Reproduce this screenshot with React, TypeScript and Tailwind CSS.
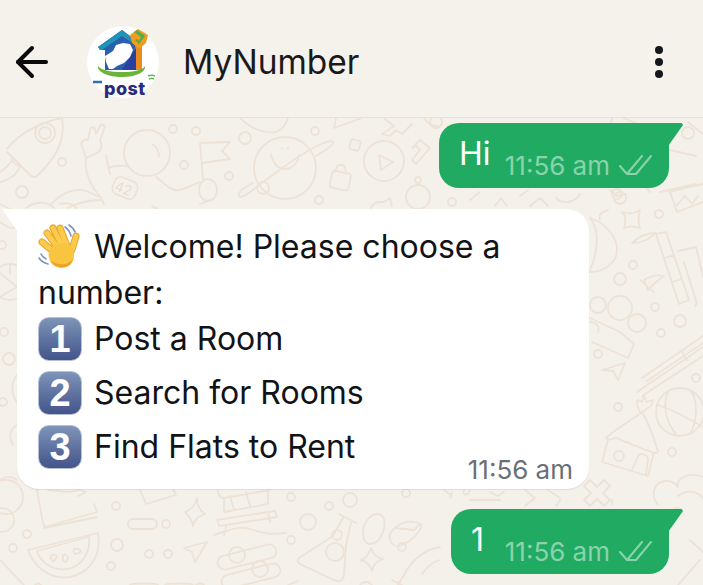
import React from 'react';
import { ArrowLeft } from 'lucide-react';

const font = "font-['Inter','Liberation_Sans',sans-serif]";

// Wallpaper doodles, drawn once behind the chat
const Wallpaper = () => (
  <svg className="absolute inset-0 h-full w-full" viewBox="0 118 703 467" fill="none" stroke="#ede2d6" strokeWidth="1.8" strokeLinejoin="round" strokeLinecap="round">
    {/* rocket */}
    <path d="M7 149C20 132 42 122 62 118C66 140 56 158 37 176C34 178 32 177 30 175L7 152" />
    <circle cx="45" cy="133" r="10" /><circle cx="45" cy="133" r="6" />
    <path d="M0 172c6-4 10-8 12-12 2 4 6 6 8 6-2 6-6 10-10 12-4 2-8 4-10 4" />
    <circle cx="62" cy="162" r="4" /><circle cx="22" cy="192" r="6" />
    <path d="M0 204l12 6M26 208c8-6 20-8 28 0M60 204c8-2 14 0 18 6" />
    {/* astronaut */}
    <path d="M86 158l-4-12c-2-4 2-8 6-6l2-10c1-4 5-3 5 0l1 4 4-8c2-3 6-1 4 3l-4 12c3 4 1 10-3 12l-11 5z" />
    <path d="M86 158c-2 12 4 28 14 38l4 8M106 156l4 18" />
    <circle cx="147" cy="153" r="23" />
    <path d="M152 144c5 3 7 8 7 13" />
    <path d="M108 168c8-3 14-3 21-1M156 177c6 4 10 10 18 13 10 2 16-6 28-8" />
    <rect x="113" y="179" width="24" height="18" rx="6" transform="rotate(22 125 188)" />
    <text x="115" y="194" fontFamily="Inter, sans-serif" fontSize="14" stroke="none" fill="#e9ded2" transform="rotate(22 125 188)">42</text>
    <path d="M50 205c12-12 24-18 36-14l14 6M100 200c-8 0-22 2-32 8M152 206l22 12M200 204l10-4" />
    {/* flag */}
    <path d="M203 180l-3-37 30-1-8 9 8 8-28 4" />
    <ellipse cx="208" cy="190" rx="9" ry="11" />
    <circle cx="173" cy="129" r="4" /><circle cx="196" cy="131" r="4" /><circle cx="184" cy="165" r="4" /><circle cx="229" cy="176" r="4" /><circle cx="245" cy="138" r="6" />
    <path d="M240 118c10 10 24 16 36 14 6-2 10-8 12-14" />
    {/* planet */}
    <circle cx="285" cy="168" r="31" />
    <path d="M271 154c2 10 8 15 14 15s12-4 14-14M282 148v1M288 148v1" />
    <path d="M316 156c10-6 18-12 17-14-2-3-16 3-30 12-20 12-44 32-56 40-6 4-9 4-8-1 1-2 6-6 14-10" />
    <circle cx="263" cy="188" r="6" />
    <circle cx="315" cy="131" r="4" /><circle cx="319" cy="200" r="4" />
    <rect x="331" y="172" width="19" height="17" rx="3" transform="rotate(12 340 180)" />
    <path d="M335 172c1-10 11-10 11 2" />
    <rect x="350" y="140" width="10" height="10" rx="2" transform="rotate(15 355 145)" />
    <circle cx="384" cy="161" r="20" />
    <path d="M379 155l14 7-12 8z" />
    <path d="M336 118l-2 10 28-10M384 118l10 8-12 8 8 2 6-6 6 4 10-10" />
    <path d="M412 148l8-8 10 8-14 16-4-4 8-10-4-4z" />
    <circle cx="418" cy="197" r="12" /><circle cx="418" cy="180" r="3" />
    <path d="M370 210c2-6 6-8 10-8l4 0 6-4 2 8" />
    <circle cx="436" cy="122" r="6" />
    {/* right column */}
    <rect x="606" y="122" width="48" height="34" rx="2" transform="rotate(22 630 139)" />
    <circle cx="688" cy="133" r="6" />
    <path d="M670 150l26 6M688 122l15 12" />
    <path d="M610 190l7 6 9-2M640 182l10 10M660 192l36-8" />
    <circle cx="617" cy="194" r="5" />
    <path d="M669 192l34-8M670 192l7 20 26-10M676 206l9-10 7 8 6-8" />
    <path d="M590 218c14 4 27 18 27 32 0 12-12 22-27 22M590 218c8 8 10 30 0 52M600 220c-2-6 2-8 8-10" />
    <path d="M622 212c6 2 12 2 18-2-2 6-2 12 0 18-6-2-12-2-16 0 2-6 2-12-2-16z" />
    <circle cx="659" cy="214" r="4" /><circle cx="633" cy="265" r="4" /><circle cx="620" cy="279" r="6" /><circle cx="655" cy="307" r="4" /><circle cx="680" cy="321" r="6" /><circle cx="661" cy="333" r="4" />
    <path d="M656 234l10-2 23 68-10 4zM664 258l10-3M672 282l10-3M632 243c6-6 14-10 24-10l-8 6c-4 2-10 4-16 4zM644 280c6-4 12-6 20-4l-8 6-8 8zM678 251l18-4 7 30M684 262l13 42-2 2M640 280l14 12" />
    <circle cx="598" cy="305" r="8" /><circle cx="620" cy="308" r="12" /><circle cx="637" cy="323" r="9" />
    <path d="M590 318l30 14 14 12 -6 14-36-16M590 322c6 0 10 4 8 10" />
    <circle cx="598" cy="354" r="4" />
    <path d="M602 370l23-7-7 17-5-9z" />
    <path d="M642 378l61-42M647 381l56-38M637 392l66-45M642 396l61-40M682 352l5 8" />
    <circle cx="696" cy="378" r="4" /><circle cx="618" cy="407" r="4" />
    <circle cx="680" cy="412" r="24" />
    <path d="M657 405c16 4 32 14 46 22M668 392c-6 14-2 30 8 42M690 390c8 8 8 30 0 44" />
    <path d="M606 438c8-8 26-18 36-26 6 10 12 26 16 40-4 4-8-2-12-2-4 0-6-4-10-4s-6-4-10-4-6-4-10-4-6 4-10 0z" />
    <path d="M640 412c-2-4-4-10-2-12l4 2 2-6 3 6 6-2-2 6-9 6" />
    <path d="M608 440l-6 22 46 14 6-24" />
    <circle cx="619" cy="456" r="5" />
    <path d="M632 470l6-14c2-4 10-2 10 4l-2 14" />
    <circle cx="672" cy="452" r="4" />
    <path d="M590 480l7 7 7-7 6 6-7 7 7 7-6 6-7-7-7 7-6-6 7-7-7-7z" />
    <path d="M658 505c-8-10-4-22 6-24 6-1 12 2 14 6-2-8 10-16 25-10M678 496c8-6 18-6 25 2M672 510c4-4 10-2 10 2" />
    <path d="M700 560l-22 25M690 540l13 12" />
    {/* left edge */}
    <path d="M0 222c8 6 14 8 16 4l2-4" />
    <circle cx="2" cy="245" r="4" />
    <circle cx="10" cy="282" r="18" />
    <path d="M0 273l18 15M0 297l17-10M10 264v10" />
    <circle cx="4" cy="332" r="4" /><circle cx="9" cy="359" r="6" /><circle cx="3" cy="402" r="4" />
    <path d="M17 375c-6 8-6 18 0 28M17 425c-8 4-8 14-4 20" />
    <path d="M0 480c6-4 12-4 17 0" />
    {/* bottom strip */}
    <circle cx="6" cy="497" r="17" /><circle cx="2" cy="520" r="12" />
    <path d="M37 490l6 33 2 4 52-15-3-8M44 528l53-11M48 490l20 2 12-2 6 2-8 4" />
    <circle cx="116" cy="506" r="4" />
    <rect x="128" y="519" width="29" height="10" rx="5" />
    <circle cx="166" cy="524" r="4" />
    <path d="M140 490l6 14 30-9-3-6" />
    <path d="M185 512c6-2 10-6 12-14 0 6 2 12 8 16-6 2-10 4-12 12-1-6-4-10-8-14z" />
    <circle cx="27" cy="534" r="4" /><circle cx="13" cy="548" r="4" /><circle cx="117" cy="545" r="6" /><circle cx="111" cy="566" r="4" /><circle cx="149" cy="554" r="4" /><circle cx="168" cy="554" r="4" />
    <path d="M28 550l70-17c4 22-8 40-28 44-20 3-36-10-42-27zM37 551l52-14c2 16-8 30-22 32-14 2-26-6-30-18z" />
    <path d="M51 556c2-2 5-2 6 1l-3 4c-2 0-4-2-3-5zM63 555c2-1 5 0 5 3l-2 4c-3 0-4-3-3-7zM74 549c3-1 6 0 7 3l-5 2c-2-1-3-3-2-5z" />
    <path d="M184 548l23-6-12 20-3-10z" />
    <path d="M218 490c0 6 2 8 6 8l0 14 44-8 0-14M224 498l46-8M230 496l4 14M246 492l4 14M217 520l58-9 2 6-58 9zM226 526l-2 10M268 512l2 10M214 535c14-4 24-10 36-6 12 4 20 6 36 4" />
    <circle cx="308" cy="522" r="8" />
    <circle cx="291" cy="497" r="4" /><circle cx="291" cy="540" r="4" /><circle cx="329" cy="506" r="4" /><circle cx="350" cy="500" r="7" /><circle cx="402" cy="547" r="4" /><circle cx="406" cy="493" r="4" />
    <rect x="217" y="550" width="60" height="14" rx="7" transform="rotate(-14 247 557)" />
    <circle cx="237" cy="555" r="8" />
    <rect x="221" y="569" width="60" height="14" rx="7" transform="rotate(-14 251 576)" />
    <circle cx="260" cy="569" r="8" />
    <path d="M339 514l17 9M343 518l-10 18-34 22c-3 3-1 4 1 6l36 17c4 1 8-2 8-6l2-30 5-22" />
    <circle cx="337" cy="535" r="5" /><circle cx="335" cy="552" r="9" />
    <path d="M363 532c0-10 8-18 14-18s10 6 6 18c-3 8-7 12-13 12-5 0-7-4-7-12zM391 532c6-8 18-14 30-8 2 4-8 18-22 22-6 1-12-6-8-14zM396 528l18 2 6-6" />
    <path d="M360 560c4 0 8-4 11-12 2 6 6 10 12 11-6 2-10 6-11 12-2-6-6-10-12-11z" />
    <path d="M440 547c-14 2-28 12-36 28l-6 10M440 560c-8 2-14 8-18 14M392 580l10 5" />
    <path d="M0 560l24 25M35 585c2-2 4-2 6 0M130 585c0-2 28-2 28 0M165 585c0-2 28-2 28 0M196 585c2-2 6-2 8 0M288 585l10-4M360 585c3-4 9-4 12 0" />
    {/* gap between bubbles */}
    <path d="M452 492l-2 6M444 490l8 6M470 490c-2 6-8 6-6 0M490 492l8 4 6-4M470 500l30 0M525 490l10 8-10 8M548 490l12 8M560 500l-4 6" />
    <path d="M600 510c6 0 8 4 8 10M612 500l0 4" />
    {/* gap under the first bubble */}
    <path d="M520 196l8-6M470 200l10-8M556 198c6 6 18 6 24-4" />
    <circle cx="620" cy="198" r="6" />
    <path d="M424 118c2 4 8 8 14 8" />
    <circle cx="452" cy="202" r="4" />
    <path d="M495 206l6-8 6 8M530 206l10-8 8 8" />
  </svg>
);

// Message tick marks
const DoubleCheck = () => (
  <svg width="33" height="22" viewBox="0 0 33 22" fill="none" stroke="#8bd3ab" strokeWidth="2" strokeLinecap="round" strokeLinejoin="round" className="mb-[5px] ml-[9px]">
    <path d="M1 12l7 8L23 2M17 20L32 2M8 20h9" />
  </svg>
);

const Keycap = ({ n }: { n: number }) => (
  <span className="mr-[12px] flex h-[44px] w-[44px] shrink-0 items-center justify-center rounded-[11px] border-[1.5px] border-[#b3c0d8] bg-gradient-to-b from-[#7f94b8] to-[#43548a] font-['Liberation_Sans',sans-serif] text-[38px] font-bold text-white">
    {n}
  </span>
);

const WaveEmoji = () => (
  <svg width="44" height="46" viewBox="0 0 44 46" className="mr-[12px] shrink-0" fill="none" strokeLinecap="round">
    <path d="M27 3c3 2 5 5 6 9M31 1c3 2 5 4 6 7M1 34c2 3 5 5 9 6M3 30c1 2 3 4 5 5" stroke="#7f93c0" strokeWidth="1.6" />
    <g stroke="#e8a22a" strokeWidth="7">
      <path d="M4 18l12 10M9 9l11 15M15 4l9 18M22 4l7 18M38 12l-4 14" />
    </g>
    <g stroke="#fbcb4c" strokeWidth="5">
      <path d="M4 18l12 10M9 9l11 15M15 4l9 18M22 4l7 18M38 12l-4 14" />
    </g>
    <path d="M12 25c3-5 14-8 20-4 6 5 5 16 0 20-5 4-12 4-17 0-4-4-6-11-3-16z" fill="#f9c440" />
    <path d="M12 36c3 5 8 8 14 7 4 0 8-3 9-8-3 4-8 6-13 5-4 0-7-2-10-4z" fill="#eda32a" />
  </svg>
);

// Small stand-in for the contact's round logo
const Logo = () => (
  <svg width="72" height="72" viewBox="0 0 72 72" className="shrink-0">
    <circle cx="36" cy="36" r="36" fill="#ffffff" />
    {/* house */}
    <path d="M11 21L35 4l12 9v5h8v26H18V24h-5z" fill="#2a5fae" />
    <path d="M11 21L35 4l12 9-3 3-9-6-20 14h-2z" fill="#1f93b8" />
    <path d="M49 18h6v26H44z" fill="#e88c20" />
    <path d="M35 44l14-22v22z" fill="#2b3f9e" />
    {/* map */}
    <path d="M18 30l8-5 3-6 7-2 7 1 3 6-3 7-6 6-7 3-4 3h-4l-3-7z" fill="#ffffff" />
    {/* shield and tick */}
    <path d="M43 9l8-6 10 6-2 8-7 6-7-6z" fill="#f29b1e" />
    <path d="M47 6l3-2 8 6-6 8-4-4 2-1 2 2 2-4z" fill="#4caf50" />
    {/* ring */}
    <path d="M11 40c-1 6 10 11 24 11s24-5 23-11c-2 4-11 6-23 6s-21-2-24-6z" fill="#6bb33a" />
    <path d="M6 56h9" stroke="#2f6fb5" strokeWidth="2.5" />
    <path d="M61 50c2-1 5-1 7 0M62 53c2-1 3-1 5 0" stroke="#57b14a" strokeWidth="1.4" fill="none" />
    <text x="17" y="69" fontFamily="Inter, sans-serif" fontWeight="800" fontSize="18" letterSpacing="0.4" fill="#2a2a7c">post</text>
  </svg>
);

const OutgoingBubble = ({ text, width }: { text: string; width: string }) => (
  <div className="relative z-10 self-end">
    {/* tail */}
    <div className="absolute right-[-14px] top-0 h-[26px] w-[17px] bg-[#21ab62] [clip-path:polygon(0_0,92%_0,100%_8%,0_100%)]" />
    <div className={`flex h-[65px] ${width} justify-between rounded-[20px] rounded-tr-none bg-[#21ab62] pl-[20px] pr-[17px]`}>
      <span className="pt-[11px] text-[32px] leading-[40px] text-white">{text}</span>
      <span className="flex items-end pb-[7px] text-[26px] leading-[30px] text-[#8bd3ab]">
        11:56 am
        <DoubleCheck />
      </span>
    </div>
  </div>
);

const Row = ({ n, label }: { n: number; label: string }) => (
  <div className="flex h-[54px] items-center">
    <Keycap n={n} />
    <span>{label}</span>
  </div>
);

export default function App() {
  return (
    <div className={`${font} flex h-[585px] w-[703px] flex-col overflow-hidden bg-[#f4f1eb] text-[#111316]`}>
      <header className="flex h-[118px] shrink-0 items-center border-b border-[#e6e3dd] bg-[#f5f2ec] pl-[8px] pr-[40px] pt-[7px]">
        <ArrowLeft size={48} strokeWidth={2} className="text-[#0b0b0b]" />
        <div className="ml-[31px]"><Logo /></div>
        <span className="ml-[24px] flex-1 text-[33.5px] text-[#1a1a1a]">MyNumber</span>
        <div className="flex flex-col gap-[4px]">
          <span className="h-[8px] w-[8px] rounded-full bg-[#14181c]" />
          <span className="h-[8px] w-[8px] rounded-full bg-[#14181c]" />
          <span className="h-[8px] w-[8px] rounded-full bg-[#14181c]" />
        </div>
      </header>

      <main className="relative flex flex-1 flex-col pr-[34px] pl-[17px] pt-[5px]">
        <Wallpaper />
        <OutgoingBubble text="Hi" width="w-[230px]" />

        {/* Incoming menu */}
        <div className="relative z-10 mt-[21px] w-[572px]">
          <div className="absolute left-[-15px] top-0 h-[26px] w-[18px] bg-white [clip-path:polygon(0_0,100%_0,100%_100%)]" />
          <div className="h-[280px] rounded-[22px] rounded-tl-none bg-white pl-[21px] pt-[15px] text-[32px] leading-[46px] shadow-[0_1px_1px_rgba(120,100,80,0.15)]">
            <div className="flex items-center">
              <WaveEmoji />
              <span>Welcome! Please choose a</span>
            </div>
            <div className="h-[42px]">number:</div>
            <Row n={1} label="Post a Room" />
            <Row n={2} label="Search for Rooms" />
            <Row n={3} label="Find Flats to Rent" />
            <div className="absolute bottom-[4px] right-[16px] text-[26px] leading-[30px] text-[#6b7076]">11:56 am</div>
          </div>
        </div>

        <div className="mt-[20px] self-end">
          <OutgoingBubble text="1" width="w-[218px]" />
        </div>
      </main>
    </div>
  );
}
